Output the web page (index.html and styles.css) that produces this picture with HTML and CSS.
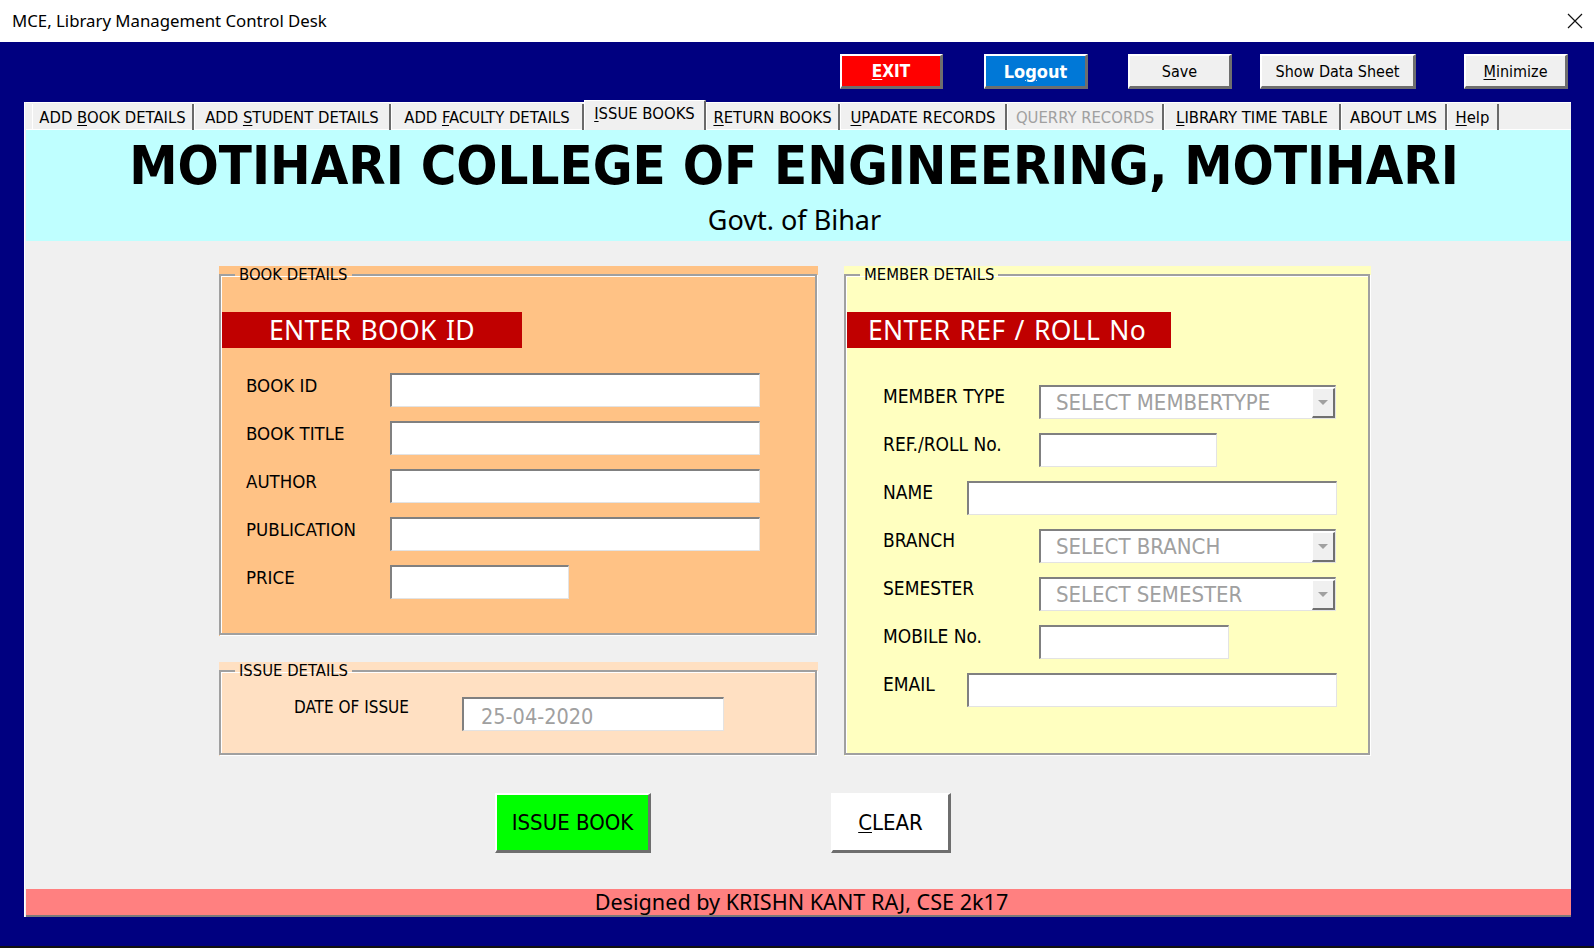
FILE: index.html
```html
<!DOCTYPE html>
<html lang="en">
<head>
<meta charset="utf-8">
<title>MCE, Library Management Control Desk</title>
<link rel="stylesheet" href="styles.css">
</head>
<body>
<div class="window">
  <div class="titlebar">
    <span class="title">MCE, Library Management Control Desk</span>
    <svg class="close" width="16" height="16" viewBox="0 0 16 16"><path d="M1 1L15 15M15 1L1 15" stroke="#111" stroke-width="1.2" fill="none"/></svg>
  </div>
  <div class="desk">
    <div class="toolbar">
      <div class="btn btn-exit"><u>E</u>XIT</div>
      <div class="btn btn-logout">Lo<u>g</u>out</div>
      <div class="btn btn-save">Save</div>
      <div class="btn btn-sheet">Show Data Sheet</div>
      <div class="btn btn-min"><u>M</u>inimize</div>
    </div>
    <div class="panel">
      <div class="tabs">
        <div class="tab">ADD <u>B</u>OOK DETAILS</div>
        <div class="tab">ADD <u>S</u>TUDENT DETAILS</div>
        <div class="tab">ADD <u>F</u>ACULTY DETAILS</div>
        <div class="tab tab-active"><u>I</u>SSUE BOOKS</div>
        <div class="tab"><u>R</u>ETURN BOOKS</div>
        <div class="tab"><u>U</u>PADATE RECORDS</div>
        <div class="tab tab-disabled">QUERRY RECORDS</div>
        <div class="tab"><u>L</u>IBRARY TIME TABLE</div>
        <div class="tab">ABOUT LMS</div>
        <div class="tab"><u>H</u>elp</div>
      </div>
      <div class="header">
        <div class="college">MOTIHARI COLLEGE OF ENGINEERING, MOTIHARI</div>
        <div class="govt">Govt. of Bihar</div>
      </div>
      <div class="content">
        <div class="columns">
          <div class="col-left">
            <div class="frame frame-book">
              <fieldset class="group">
                <legend>BOOK DETAILS</legend>
                <div class="banner banner-book">ENTER BOOK ID</div>
                <div class="book-rows">
                  <div class="label">BOOK ID</div><div class="field f-long"></div>
                  <div class="label">BOOK TITLE</div><div class="field f-long"></div>
                  <div class="label">AUTHOR</div><div class="field f-long"></div>
                  <div class="label">PUBLICATION</div><div class="field f-long"></div>
                  <div class="label">PRICE</div><div class="field f-price"></div>
                </div>
              </fieldset>
            </div>
            <div class="frame frame-issue">
              <fieldset class="group">
                <legend>ISSUE DETAILS</legend>
                <div class="issue-row">
                  <div class="label-small">DATE OF ISSUE</div>
                  <div class="field f-date"><span class="hint hint-date">25-04-2020</span></div>
                </div>
              </fieldset>
            </div>
          </div>
          <div class="frame frame-member">
            <fieldset class="group">
              <legend>MEMBER DETAILS</legend>
              <div class="banner banner-member">ENTER REF / ROLL No</div>
              <div class="member-rows">
                <div class="label wide">MEMBER TYPE</div><div class="field combo"><span class="hint">SELECT MEMBERTYPE</span><span class="drop"><span class="tri"></span></span></div>
                <div class="label wide">REF./ROLL No.</div><div class="field f-ref"></div>
                <div class="label">NAME</div><div class="field f-full"></div>
                <div class="label wide">BRANCH</div><div class="field combo"><span class="hint">SELECT BRANCH</span><span class="drop"><span class="tri"></span></span></div>
                <div class="label wide">SEMESTER</div><div class="field combo"><span class="hint">SELECT SEMESTER</span><span class="drop"><span class="tri"></span></span></div>
                <div class="label wide">MOBILE No.</div><div class="field f-mobile"></div>
                <div class="label">EMAIL</div><div class="field f-full"></div>
              </div>
            </fieldset>
          </div>
        </div>
        <div class="actions">
          <div class="btn-big btn-issue">ISSUE BOOK</div>
          <div class="btn-big btn-clear"><u>C</u>LEAR</div>
        </div>
      </div>
      <div class="footer">Designed by KRISHN KANT RAJ, CSE 2k17</div>
    </div>
  </div>
</div>
</body>
</html>
```

FILE: styles.css
```css
* { box-sizing: border-box; }
html, body { margin: 0; padding: 0; }
body {
  width: 1594px;
  height: 948px;
  overflow: hidden;
  font-family: "DejaVu Sans Condensed", "DejaVu Sans", sans-serif;
  font-stretch: condensed;
  color: #000;
}
u { text-decoration: underline; text-underline-offset: 2px; text-decoration-thickness: 1px; }

.window { width: 1594px; height: 948px; display: flex; flex-direction: column; }

.titlebar {
  height: 42px;
  background: #fff;
  display: flex;
  align-items: center;
  justify-content: space-between;
  padding: 0 10px 0 12px;
}
.title {
  font-family: "Noto Sans", "Open Sans", sans-serif;
  font-stretch: normal;
  font-size: 16.8px;
  color: #000;
  margin-top: -1px;
}
.close { margin-right: 1px; }

.desk {
  flex: 1;
  background: #000080;
  padding-top: 12px;
  border-bottom: 2px solid #111;
}

.toolbar {
  height: 35px;
  display: flex;
  padding-left: 840px;
  margin-bottom: 13px;
}
.btn {
  height: 35px;
  display: flex;
  align-items: center;
  justify-content: center;
  font-size: 16px;
  border-style: solid;
  border-width: 2px 3px 3px 2px;
  border-color: #fff #6e6e6e #6e6e6e #fff;
  background: #f0f0f0;
}
.btn-exit { width: 103px; background: #ff0000; color: #fff; font-weight: bold; font-size: 17px; }
.btn-logout { width: 104px; margin-left: 41px; background: #0078d7; color: #fff; font-weight: bold; font-size: 18px; }
.btn-save { width: 104px; margin-left: 40px; }
.btn-sheet { width: 156px; margin-left: 28px; }
.btn-min { width: 104px; margin-left: 48px; }

.panel {
  margin-left: 24px;
  width: 1547px;
  background: #f0f0f0;
  border-left: 1px solid #fff;
  padding-left: 1px;
  display: flex;
  flex-direction: column;
}

.tabs {
  height: 28px;
  display: flex;
  align-items: flex-end;
  padding-left: 6px;
  background: #f0f0f0;
  border-top: 1px solid #fff;
  border-bottom: 1px solid #fff;
}
.tab {
  height: 26px;
  line-height: 24px;
  padding-top: 2px;
  text-align: center;
  font-size: 16.5px;
  border-left: 1px solid #fff;
  border-right: 2px solid #6a6a6a;
  white-space: nowrap;
  margin-bottom: -1px;
}
.tab:nth-child(1) { width: 162px; }
.tab:nth-child(2) { width: 197px; }
.tab:nth-child(3) { width: 193px; }
.tab:nth-child(4) { width: 122px; }
.tab:nth-child(5) { width: 134px; }
.tab:nth-child(6) { width: 167px; }
.tab:nth-child(7) { width: 157px; }
.tab:nth-child(8) { width: 177px; }
.tab:nth-child(9) { width: 106px; }
.tab:nth-child(10) { width: 52px; }
.tab-active {
  height: 30px;
  line-height: 24px;
  padding-top: 1px;
  background: #f0f0f0;
  border-top: 1px solid #fff;
}
.tab-disabled { color: #a0a0a0; }

.header {
  height: 111px;
  background: #bfffff;
  display: flex;
  flex-direction: column;
  align-items: center;
}
.college {
  font-weight: bold;
  font-size: 54px;
  line-height: 68px;
  margin-top: 2px;
  margin-right: 9px;
  white-space: nowrap;
}
.govt {
  font-family: "Noto Sans", "Open Sans", sans-serif;
  font-stretch: normal;
  font-size: 27px;
  line-height: 34px;
  margin-top: 3px;
  margin-right: 8px;
}

.content {
  height: 648px;
  padding: 25px 0 0 193px;
}
.columns { display: flex; gap: 26px; height: 490px; }
.col-left { display: flex; flex-direction: column; gap: 26px; }

.group {
  margin: 0;
  padding: 0;
  height: 100%;
  border: 2px solid #a0a0a0;
  box-shadow: inset 1px 1px 0 #fff, 1px 1px 0 #fff;
  min-width: 0;
}
.group legend {
  margin-left: 14px;
  padding: 0 4px;
  font-size: 16.5px;
  line-height: 18px;
}

.frame-book { width: 599px; height: 370px; background: #ffc285; padding: 0 1px 1px 0; }
.frame-issue { width: 599px; height: 94px; background: #ffe0c2; padding: 0 1px 1px 0; }
.frame-member { width: 527px; height: 490px; background: #ffffc0; padding: 0 1px 1px 0; }

.banner {
  height: 36px;
  background: #c00000;
  color: #fff;
  font-family: "Noto Sans", "Open Sans", sans-serif;
  font-stretch: normal;
  font-size: 26.5px;
  letter-spacing: 0.3px;
  word-spacing: 2px;
  display: flex;
  align-items: center;
  margin-top: 28px;
  margin-left: 1px;
}
.banner-book { width: 300px; padding-left: 47px; }
.banner-member { width: 324px; padding-left: 21px; }

.label {
  font-size: 18.5px;
  line-height: 22px;
  padding-top: 2px;
  white-space: nowrap;
}
.field {
  height: 34px;
  background: #fff;
  border-style: solid;
  border-width: 2px 1px 1px 2px;
  border-color: #808080 #e3e3e3 #e3e3e3 #808080;
  display: flex;
  align-items: center;
}
.hint {
  color: #a0a0a0;
  font-size: 22px;
  padding-left: 15px;
}
.hint-date { font-size: 21.5px; padding-left: 17px; padding-top: 3px; }

.book-rows {
  display: grid;
  grid-template-columns: 144px 370px;
  row-gap: 14px;
  margin: 25px 0 0 25px;
}
.f-long { width: 370px; }
.f-price { width: 179px; }

.issue-row {
  display: flex;
  align-items: flex-start;
  margin: 17px 0 0 73px;
}
.label-small { font-size: 17px; width: 168px; padding-top: 0; }
.f-date { width: 262px; }

.member-rows {
  display: grid;
  grid-template-columns: 84px 72px 298px;
  row-gap: 14px;
  margin: 37px 0 0 37px;
}
.member-rows .label { font-size: 19px; padding-top: 0; }
.member-rows .label.wide { grid-column: span 2; }
.member-rows .field { grid-column: 3; }
.member-rows .f-full { grid-column: 2 / span 2; width: 370px; }
.combo { width: 297px; justify-content: space-between; }
.f-ref { width: 178px; }
.f-mobile { width: 190px; }
.drop {
  width: 23px;
  height: 30px;
  background: #f0f0f0;
  border-style: solid;
  border-width: 1px 2px 2px 1px;
  border-color: #fff #707070 #707070 #fff;
  display: flex;
  align-items: center;
  justify-content: center;
}
.tri {
  width: 0; height: 0;
  border-left: 5px solid transparent;
  border-right: 5px solid transparent;
  border-top: 5px solid #a0a0a0;
}

.actions {
  display: flex;
  gap: 180px;
  margin: 37px 0 0 276px;
}
.btn-big {
  height: 60px;
  display: flex;
  align-items: center;
  justify-content: center;
  font-size: 22px;
  border-style: solid;
  border-width: 2px 3px 3px 2px;
  border-color: #fff #6e6e6e #6e6e6e #fff;
}
.btn-issue { width: 156px; background: #00ff00; }
.btn-clear { width: 120px; background: #fff; }

.footer {
  height: 28px;
  background: #ff8080;
  border-bottom: 2px solid #7a7a7a;
  font-family: "Noto Sans", "Open Sans", sans-serif;
  font-stretch: normal;
  font-size: 21.6px;
  line-height: 26px;
  text-align: center;
  padding-left: 6px;
}
```
